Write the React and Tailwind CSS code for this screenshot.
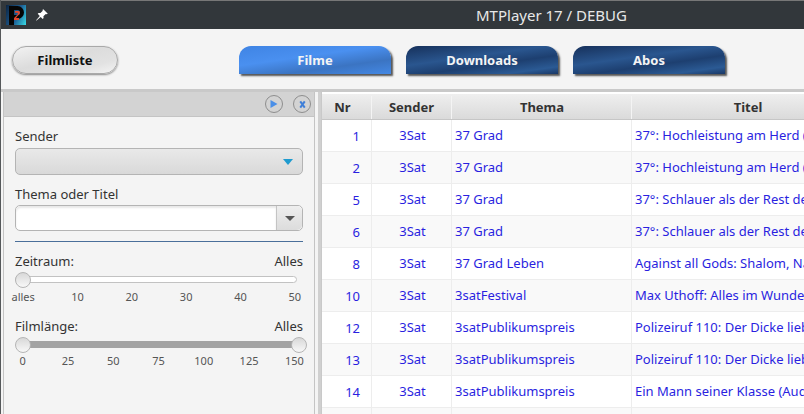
const rows = [
  ['1', '37 Grad', '37°: Hochleistung am Herd (1/2)'],
  ['2', '37 Grad', '37°: Hochleistung am Herd (2/2)'],
  ['5', '37 Grad', '37°: Schlauer als der Rest der Welt'],
  ['6', '37 Grad', '37°: Schlauer als der Rest der Welt'],
  ['8', '37 Grad Leben', 'Against all Gods: Shalom, Nablus'],
  ['10', '3satFestival', 'Max Uthoff: Alles im Wunderland'],
  ['12', '3satPublikumspreis', 'Polizeiruf 110: Der Dicke liebt'],
  ['13', '3satPublikumspreis', 'Polizeiruf 110: Der Dicke liebt'],
  ['14', '3satPublikumspreis', 'Ein Mann seiner Klasse (Audiodeskription)'],
  ['15', '', ''],
];

const tabs = [
  { label: 'Filme', cls: 'bg-[linear-gradient(172deg,#3f84e4_0%,#4a90f0_40%,#3b74c2_70%,#4488e4_100%)]' },
  { label: 'Downloads', cls: 'bg-[linear-gradient(172deg,#16305a_0%,#2a568f_40%,#1d3f70_62%,#2b5a94_85%,#1a3866_100%)]' },
  { label: 'Abos', cls: 'bg-[linear-gradient(172deg,#16305a_0%,#2a568f_40%,#1d3f70_62%,#2b5a94_85%,#1a3866_100%)]' },
];

const zeit = ['alles', '10', '20', '30', '40', '50'];
const laenge = ['0', '25', '50', '75', '100', '125', '150'];

function Knob() {
  return <div className="size-4 shrink-0 rounded-full border border-[#b5b5b5] bg-[linear-gradient(#d8d8d8,#f8f8f8)]" />;
}

function Logo() {
  return (
    <div className="ml-[5px] size-5 overflow-hidden bg-[linear-gradient(115deg,#0c2340_0%,#1d5f96_55%,#38dbe6_100%)]">
      <svg viewBox="0 0 20 20" className="size-5">
        <path fillRule="evenodd" d="M3 1h8.5a6.5 6.5 0 0 1 0 13H8v6H3zM8 5v5h3.5a2.5 2.5 0 0 0 0-5z" fill="#050505" />
        <path d="M9 6h3.5c2 0 2 3-.5 4.5L10 13h3v2H8v-2l3.5-3.5c.8-1 .5-1.8-.5-1.8H9z" fill="#e0452c" />
      </svg>
    </div>
  );
}

function PinIcon() {
  return (
    <svg viewBox="0 0 14 14" className="ml-[9px] size-[14px]">
      <path d="M8.3 1.2l4.5 4.5-1.2.6-.8-.4-2.4 2.4.2 1.8-.9.9-2-2L1.5 12.6l-.6-.1 3.9-4.6-2.1-2.1.9-.9 1.8.2 2.4-2.4-.4-.8z" fill="#fff" />
    </svg>
  );
}

export default function App() {
  return (
    <div className="flex h-[414px] w-[804px] flex-col overflow-hidden border-l border-[#55585a] bg-[#f4f4f4] font-['Noto_Sans',sans-serif]">
      {/* title bar */}
      <div className="relative flex h-[29px] shrink-0 items-center border-t border-[#777] bg-[#32373b]">
        <Logo />
        <PinIcon />
        <div className="absolute left-[475px] top-[4px] text-[15px] leading-5 text-[#e8e8e8]">MTPlayer 17 / DEBUG</div>
      </div>

      {/* toolbar */}
      <div className="flex h-[60px] shrink-0 items-center pt-[2px]">
        <div className="ml-[11px] flex h-[28px] w-[106px] items-center justify-center rounded-[14px] border border-[#a9a9a9] bg-[linear-gradient(165deg,#f2f2f2_0%,#dcdcdc_45%,#e2e2e2_75%,#f4f4f4_100%)] pt-[2px] text-[13px] font-bold text-[#111] shadow-[0_1px_2px_#888]">
          Filmliste
        </div>
        <div className="ml-[121px] flex gap-[15px]">
          {tabs.map(t => (
            <div key={t.label} className={`flex h-[28px] w-[152px] items-center justify-center rounded-t-[12px] pt-[2px] text-[13px] font-bold text-[#f4f4f4] shadow-[2px_2px_2px_#555] ${t.cls}`}>
              {t.label}
            </div>
          ))}
        </div>
      </div>

      <div className="flex min-h-0 flex-1 border-t-[3px] border-[#c9c9c9]">
        {/* filter panel */}
        <div className="ml-[2px] flex w-[312px] shrink-0 flex-col border-x border-[#c4c4c4] text-[#333]">
          <div className="flex h-[25px] shrink-0 items-center justify-end gap-[10px] border-b border-[#c4c4c4] bg-[#d3d3d3] pr-[3px]">
            <div className="flex size-[18px] items-center justify-center rounded-full border-[1.5px] border-[#8e8e8e]">
              <svg viewBox="0 0 10 10" className="size-[10px]"><path d="M1.5 1v8l7-4z" fill="#4a8fe8" /></svg>
            </div>
            <div className="flex size-[18px] items-center justify-center rounded-full border-[1.5px] border-[#8e8e8e]">
              <svg viewBox="0 0 10 10" className="size-[9px]"><path d="M2.5 1.5l5 7M7.5 1.5l-5 7" stroke="#3f7fd8" strokeWidth="2.2" /></svg>
            </div>
          </div>
          <div className="flex flex-1 flex-col px-[11px] pt-[10px]">
            <div className="text-[13px] leading-[18px]">Sender</div>
            <div className="mt-[3px] flex h-[27px] items-center justify-end rounded-[5px] border border-[#b4b4b4] bg-[linear-gradient(#e9e9e9,#d9d9d9)] pr-[9px]">
              <div className="size-0 border-x-[5px] border-t-[6px] border-x-transparent border-t-[#1f9bcf]" />
            </div>
            <div className="mt-[10px] text-[13px] leading-[18px]">Thema oder Titel</div>
            <div className="mt-[2px] flex h-[26px] rounded-[5px] border border-[#b4b4b4] bg-white">
              <div className="flex-1 rounded-l-[5px] shadow-[inset_0_2px_2px_#e8e8e8]" />
              <div className="flex w-[26px] items-center justify-center rounded-r-[5px] border-l border-[#c4c4c4] bg-[linear-gradient(#eeeeee,#dcdcdc)]">
                <div className="size-0 border-x-[5px] border-t-[5px] border-x-transparent border-t-[#555]" />
              </div>
            </div>
            <div className="mt-[10px] h-px bg-[#4a6f9a]" />

            <div className="mt-[10px] flex justify-between text-[13px] leading-[18px]">
              <span>Zeitraum:</span>
              <span>Alles</span>
            </div>
            <div className="relative mt-[2px] h-4">
              <div className="absolute inset-x-0 top-[4px] mr-[6px] h-[7px] rounded-full border border-[#c2c2c2] bg-white" />
              <div className="absolute left-0 top-0"><Knob /></div>
            </div>
            <div className="-ml-[19px] mt-[2px] grid w-[326px] grid-cols-6 text-center text-[11px] leading-[14px] text-[#555]">
              {zeit.map(v => <span key={v}>{v}</span>)}
            </div>

            <div className="mt-[13px] flex justify-between text-[13px] leading-[18px]">
              <span>Filmlänge:</span>
              <span>Alles</span>
            </div>
            <div className="relative mt-[2px] h-4">
              <div className="absolute inset-x-[8px] top-[4px] h-[7px] bg-[#a3a3a3]" />
              <div className="absolute left-0 top-0"><Knob /></div>
              <div className="absolute -right-[4px] top-0"><Knob /></div>
            </div>
            <div className="-ml-[15px] mt-[1px] grid w-[317px] grid-cols-7 text-center text-[11px] leading-[14px] text-[#555]">
              {laenge.map(v => <span key={v}>{v}</span>)}
            </div>
          </div>
        </div>

        {/* divider */}
        <div className="w-[6px] shrink-0 border-r-[3px] border-[#d0d0d0] bg-[#f4f4f4]" />

        {/* film table */}
        <div className="min-w-0 flex-1 overflow-hidden border-l border-[#c9c9c9] bg-white pt-[2px]">
          <div className="flex h-[26px] border-b border-[#c6c6c6] bg-[linear-gradient(#efefef,#dadada)] pt-[2px] text-[13px] font-bold text-[#333]">
            <div className="flex w-[50px] shrink-0 items-center justify-center border-r border-[#f4f4f4] pr-[8px]">Nr</div>
            <div className="flex w-[80px] shrink-0 items-center justify-center border-r border-[#f4f4f4]">Sender</div>
            <div className="flex w-[180px] shrink-0 items-center justify-center border-r border-[#f4f4f4] pl-px">Thema</div>
            <div className="flex w-[232px] shrink-0 items-center justify-center">Titel</div>
          </div>
          {rows.map(([nr, thema, titel], i) => (
            <div key={nr} className={`flex h-[32px] border-b border-[#ededed] text-[13px] text-[#2a1fe0] ${i % 2 ? 'bg-[#f9f9f9]' : 'bg-white'}`}>
              <div className="flex w-[50px] shrink-0 items-center justify-end border-r border-[#ededed] pr-[11px] pt-[2px]">{nr}</div>
              <div className="flex w-[80px] shrink-0 items-center justify-center border-r border-[#ededed] pl-[2px]">3Sat</div>
              <div className="flex w-[180px] shrink-0 items-center border-r border-[#ededed] pl-[3px]">{thema}</div>
              <div className="flex w-[232px] shrink-0 items-center overflow-hidden whitespace-nowrap pl-[3px]">{titel}</div>
            </div>
          ))}
        </div>
      </div>
    </div>
  );
}
